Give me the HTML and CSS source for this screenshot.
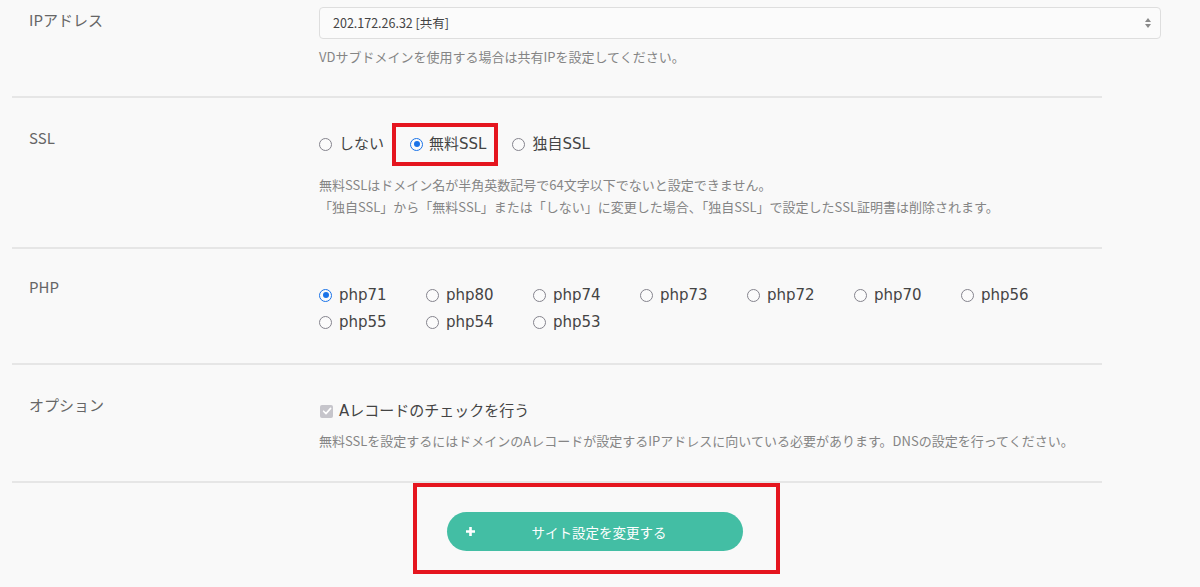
FILE: index.html
```html
<!DOCTYPE html>
<html lang="ja">
<head>
<meta charset="utf-8">
<title>サイト設定</title>
<link rel="stylesheet" href="styles.css">
</head>
<body>
<div class="form">
  <div class="row row-ip">
    <div class="label">IPアドレス</div>
    <div class="content">
      <div class="select">
        <span class="select-text">202.172.26.32 [共有]</span>
        <span class="select-arrows">
          <svg width="8" height="12" viewBox="0 0 8 12"><path d="M4 1 L7 5 H1 Z M4 11 L7 7 H1 Z" fill="#8a8a8a"/></svg>
        </span>
      </div>
      <div class="hint hint-ip">VDサブドメインを使用する場合は共有IPを設定してください。</div>
    </div>
  </div>
  <div class="divider"></div>

  <div class="row row-ssl">
    <div class="label">SSL</div>
    <div class="content">
      <div class="radios">
        <label class="radio"><span class="circle"></span><span class="rtext">しない</span></label>
        <label class="radio marked"><span class="circle checked"></span><span class="rtext">無料SSL</span><span class="redbox"></span></label>
        <label class="radio"><span class="circle"></span><span class="rtext">独自SSL</span></label>
      </div>
      <div class="hint hint-ssl">無料SSLはドメイン名が半角英数記号で64文字以下でないと設定できません。<br>「独自SSL」から「無料SSL」または「しない」に変更した場合、「独自SSL」で設定したSSL証明書は削除されます。</div>
    </div>
  </div>
  <div class="divider"></div>

  <div class="row row-php">
    <div class="label">PHP</div>
    <div class="content">
      <div class="php-grid">
        <label class="radio"><span class="circle checked"></span><span class="rtext">php71</span></label>
        <label class="radio"><span class="circle"></span><span class="rtext">php80</span></label>
        <label class="radio"><span class="circle"></span><span class="rtext">php74</span></label>
        <label class="radio"><span class="circle"></span><span class="rtext">php73</span></label>
        <label class="radio"><span class="circle"></span><span class="rtext">php72</span></label>
        <label class="radio"><span class="circle"></span><span class="rtext">php70</span></label>
        <label class="radio"><span class="circle"></span><span class="rtext">php56</span></label>
        <label class="radio"><span class="circle"></span><span class="rtext">php55</span></label>
        <label class="radio"><span class="circle"></span><span class="rtext">php54</span></label>
        <label class="radio"><span class="circle"></span><span class="rtext">php53</span></label>
      </div>
    </div>
  </div>
  <div class="divider"></div>

  <div class="row row-opt">
    <div class="label">オプション</div>
    <div class="content">
      <label class="check">
        <span class="box"><svg width="12" height="12" viewBox="0 0 12 12"><path d="M2.6 6.2 L5 8.6 L9.6 3.4" fill="none" stroke="#fff" stroke-width="1.6" stroke-linecap="round" stroke-linejoin="round"/></svg></span>
        <span class="rtext">Aレコードのチェックを行う</span>
      </label>
      <div class="hint hint-opt">無料SSLを設定するにはドメインのAレコードが設定するIPアドレスに向いている必要があります。DNSの設定を行ってください。</div>
    </div>
  </div>
  <div class="divider"></div>

  <div class="submit-area">
    <div class="submit-box">
      <button class="submit" type="button">
        <svg class="plus" width="9" height="9" viewBox="0 0 9 9"><path d="M3.2 0 H5.8 V3.2 H9 V5.8 H5.8 V9 H3.2 V5.8 H0 V3.2 H3.2 Z" fill="#fff"/></svg>
        <span class="submit-text">サイト設定を変更する</span>
      </button>
    </div>
  </div>
</div>
</body>
</html>
```

FILE: styles.css
```css
* { box-sizing: border-box; }

html, body {
  margin: 0;
  padding: 0;
  background: #f9f9f9;
}

body {
  font-family: "Noto Sans CJK JP", "Noto Sans", sans-serif;
  color: #555;
  overflow: hidden;
  height: 587px;
}

.form {
  padding-left: 12px;
}

.row {
  display: flex;
}

.label {
  width: 307px;
  padding-left: 17px;
  font-size: 15px;
  line-height: 20px;
  color: #666;
}

.content {
  width: 842px;
}

.divider {
  width: 1090px;
  height: 2px;
  background: #e6e6e6;
}

/* IP row */
.row-ip { padding-top: 7px; padding-bottom: 29px; }
.row-ip .label { margin-top: 3px; }

.select {
  height: 32px;
  border: 1px solid #dedede;
  border-radius: 4px;
  background: #fbfbfb;
  display: flex;
  align-items: center;
  justify-content: space-between;
  padding: 0 8px 0 13px;
}

.select-text {
  font-family: "Noto Sans CJK JP", sans-serif;
  font-size: 12.5px;
  color: #444;
  line-height: 18px;
}

.select-arrows {
  display: flex;
  align-items: center;
}

.hint {
  font-size: 13px;
  color: #858585;
  line-height: 20px;
}

.hint-ip { margin-top: 8px; }

/* Radios */
.radio {
  display: inline-flex;
  align-items: center;
  position: relative;
  font-family: "DejaVu Sans", "Noto Sans CJK JP", sans-serif;
  font-size: 15px;
  line-height: 20px;
  color: #444;
}

.circle {
  width: 13px;
  height: 13px;
  border-radius: 50%;
  border: 1.6px solid #85848d;
  background: #fbfbfb;
  margin-right: 7px;
  flex: none;
  position: relative;
}

.circle.checked {
  border: 1.6px solid #1a73e8;
}

.circle.checked::after {
  content: "";
  position: absolute;
  left: 50%;
  top: 50%;
  width: 6px;
  height: 6px;
  margin: -3px 0 0 -3px;
  border-radius: 50%;
  background: #1a73e8;
}

.row-ssl { padding-top: 30px; padding-bottom: 29px; }

.radios {
  display: flex;
  gap: 26px;
  margin-top: 6px;
}

.radios .radio:nth-child(2) .circle { margin-right: 6px; }

.redbox {
  position: absolute;
  left: -18px;
  right: -12px;
  top: -11px;
  bottom: -12px;
  border: 4px solid #e5161f;
  pointer-events: none;
}

.hint-ssl {
  margin-top: 20px;
  line-height: 22px;
}

/* PHP */
.row-php { padding-top: 28px; padding-bottom: 31px; }

.php-grid {
  margin-top: 8px;
  display: grid;
  grid-template-columns: repeat(7, 107px);
  row-gap: 7px;
}

/* Option */
.row-opt { padding-top: 30px; padding-bottom: 30px; }

.check {
  display: flex;
  align-items: center;
  margin-top: 6px;
  font-family: "DejaVu Sans", "Noto Sans CJK JP", sans-serif;
  font-size: 15px;
  line-height: 20px;
  color: #444;
}

.box {
  width: 13px;
  height: 13px;
  border-radius: 2px;
  background: #c6c5cb;
  margin-left: 1px;
  margin-right: 6px;
  display: flex;
  align-items: center;
  justify-content: center;
  flex: none;
}

.hint-opt { margin-top: 10px; }

/* Submit */
.submit-area {
  padding-left: 401px;
}

.submit-box {
  width: 367px;
  height: 91px;
  border: 4px solid #e5161f;
  padding: 25px 0 0 30px;
}

.submit {
  position: relative;
  width: 296px;
  height: 39px;
  border: none;
  border-radius: 20px;
  background: #43bea4;
  color: #fff;
  font-family: "Noto Sans CJK JP", sans-serif;
  font-size: 13.5px;
  padding: 0 0 0 8px;
  display: flex;
  align-items: center;
  justify-content: center;
}

.plus {
  position: absolute;
  left: 19px;
  top: 15px;
}
```
